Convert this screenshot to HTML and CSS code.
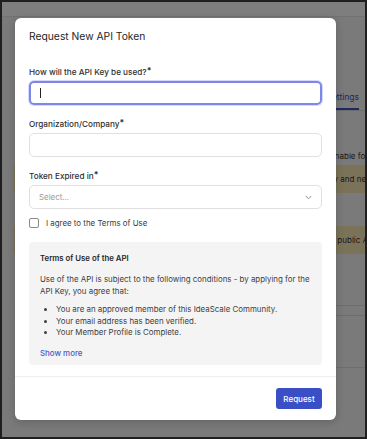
FILE: index.html
```html
<!DOCTYPE html>
<html lang="en">
<head>
  <meta charset="UTF-8" />
  <meta name="viewport" content="width=device-width, initial-scale=1.0"/>
  <title>Request New API Token</title>
  <link rel="stylesheet" href="styles.css">
</head>
<body>

<div class="screen">
  <!-- page behind the dialog -->
  <div class="app">
    <div class="topbar"></div>
    <div class="main">
      <div class="tabs">
        <span class="tab active">API Settings</span>
      </div>
      <div class="row plain"><span></span><span class="t1">Enable form submissions</span></div>
      <div class="row notice"><span></span><span class="t2">Privacy and new terms</span></div>
      <div class="row plain thin"></div>
      <div class="row notice"><span></span><span class="t3">Use the public API</span></div>
      <div class="row plain tall"></div>
      <div class="row plain short"></div>
      <div class="row plain tall"></div>
    </div>
  </div>

  <div class="overlay">
    <div class="modal">
      <div class="modal-header">
        <h1>Request New API Token</h1>
      </div>

      <div class="modal-body">
        <div class="field">
          <label>How will the API Key be used?<b>*</b></label>
          <div class="input focused"><span class="caret"></span></div>
        </div>

        <div class="field">
          <label>Organization/Company<b>*</b></label>
          <div class="input"></div>
        </div>

        <div class="field">
          <label>Token Expired in<b>*</b></label>
          <div class="input select">
            <span class="placeholder">Select...</span>
            <svg width="7" height="5" viewBox="0 0 7 5"><polyline points="0.8,1 3.5,3.8 6.2,1" fill="none" stroke="#8a8a8a" stroke-width="1"/></svg>
          </div>
        </div>

        <div class="agree">
          <span class="checkbox"></span>
          <span>I agree to the Terms of Use</span>
        </div>

        <div class="terms">
          <h2>Terms of Use of the API</h2>
          <p>Use of the API is subject to the following conditions - by applying for the API Key, you agree that:</p>
          <ul>
            <li>You are an approved member of this IdeaScale Community.</li>
            <li>Your email address has been verified.</li>
            <li>Your Member Profile is Complete.</li>
          </ul>
          <a href="#" class="more">Show more</a>
        </div>
      </div>

      <div class="modal-footer">
        <button class="btn-primary">Request</button>
      </div>
    </div>
  </div>
</div>

</body>
</html>
```

FILE: styles.css
```css
* { margin: 0; padding: 0; box-sizing: border-box; }

body {
  font-family: 'Inter', 'Noto Sans', sans-serif;
  background: #fff;
  width: 367px;
  height: 442px;
  overflow: hidden;
}

.screen {
  position: relative;
  width: 367px;
  height: 439px;
  border: 2px solid #1f1f1f;
  overflow: hidden;
}

/* background page */
.app {
  height: 100%;
  background: #f5f5f6;
}

.topbar {
  height: 15px;
  background: #fdfdfd;
  border-bottom: 1px solid #e4e4e4;
}

.main {
  padding-left: 12px;
}

.tabs {
  display: flex;
  justify-content: flex-end;
  padding: 0 6px 0 0;
  height: 94px;
  align-items: flex-end;
  border-bottom: 1px solid #dcdcdc;
  font-size: 8.5px;
  color: #555;
  white-space: nowrap;
}

.tab { padding-bottom: 6px; }

.tab.active {
  color: #3f4fc6;
  border-bottom: 2px solid #3f4fc6;
}

.row {
  display: grid;
  grid-template-columns: 312px 1fr;
  align-items: center;
  white-space: nowrap;
  font-size: 8px;
  color: #333;
  border-bottom: 1px solid #dcdcdc;
}

.row.plain { height: 55px; align-items: end; padding-bottom: 4px; }
.row.plain.thin { height: 34px; }
.row.plain.tall { height: 52px; }
.row.plain.short { height: 10px; }
.row.notice {
  height: 28px;
  background: #f7e6b3;
  border-bottom: none;
  margin-top: -1px;
}

.t1 { margin-left: 4px; }
.t2 { margin-left: -16px; }
.t3 { margin-left: -20px; }

.overlay {
  position: absolute;
  inset: 0;
  background: rgba(0, 0, 0, 0.5);
  padding: 16px 0 0 13px;
}

/* dialog */
.modal {
  width: 321px;
  height: 402px;
  background: #fff;
  border-radius: 6px;
  box-shadow: 0 2px 8px rgba(0,0,0,0.2);
  display: flex;
  flex-direction: column;
}

.modal-header {
  padding: 10px 14px 0;
  flex-shrink: 0;
}

.modal-header h1 {
  font-size: 10.3px;
  line-height: 16px;
  font-weight: 400;
  color: #262626;
}

.modal-body {
  padding: 22px 14px 12px;
  display: flex;
  flex-direction: column;
  gap: 13px;
  flex: 1;
  overflow: hidden;
}

.field label {
  display: block;
  height: 12px;
  font-size: 8.2px;
  line-height: 12px;
  font-weight: 500;
  color: #2f2f2f;
  margin-bottom: 3px;
}

.field label b {
  font-weight: 700;
  font-size: 8.5px;
  line-height: 0;
  vertical-align: 1px;
}

.input {
  height: 24px;
  border: 1px solid #e0e0e0;
  border-radius: 5px;
  display: flex;
  align-items: center;
  padding: 0 9px;
}

.input.focused {
  border: 2px solid #7d87ea;
  box-shadow: 0 0 0 1px #d6daf8;
}

.caret {
  width: 1px;
  height: 10px;
  background: #222;
}

.select {
  justify-content: space-between;
  font-size: 7.9px;
  color: #9a9a9a;
}

.agree {
  display: flex;
  align-items: center;
  gap: 7px;
  height: 12px;
  font-size: 7.9px;
  line-height: 12px;
  color: #3a3a3a;
  margin-top: -5px;
}

.checkbox {
  width: 10px;
  height: 10px;
  border: 1px solid #8a8a8a;
  border-radius: 2px;
}

.terms {
  background: #f4f4f4;
  border-radius: 4px;
  padding: 10px 11px 6px;
  font-size: 7.9px;
  line-height: 12px;
  color: #404040;
  flex-shrink: 0;
}

.terms h2 {
  font-size: 7.8px;
  line-height: 12px;
  font-weight: 600;
  color: #262626;
  margin-bottom: 9px;
}

.terms p { margin-bottom: 7px; }

.terms ul {
  padding-left: 16px;
  margin-bottom: 8px;
  line-height: 11.7px;
}

.more {
  color: #4a58cf;
  font-weight: 500;
  text-decoration: none;
}

.modal-footer {
  border-top: 1px solid #eeeeee;
  padding: 11px 14px;
  display: flex;
  justify-content: flex-end;
  flex-shrink: 0;
}

.btn-primary {
  font-family: inherit;
  height: 21px;
  width: 46px;
  background: #3a4ec6;
  color: #fff;
  border: none;
  border-radius: 3px;
  font-size: 8px;
  font-weight: 500;
  cursor: pointer;
}
```
